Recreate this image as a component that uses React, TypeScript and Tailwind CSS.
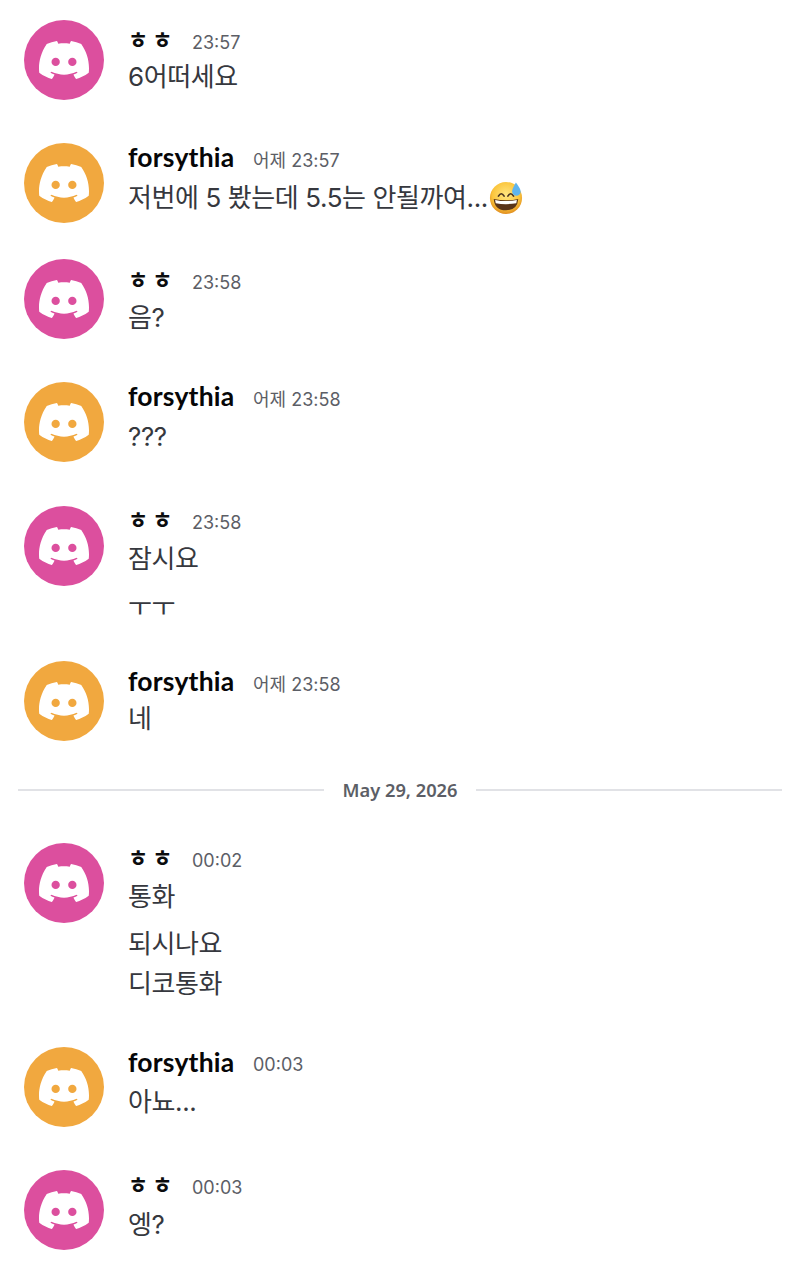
const KR = "font-['Inter','Noto_Sans_CJK_KR',sans-serif]";

type Line = { text: string; cls: string; emoji?: boolean };
type Msg = {
  who: "h" | "f";
  time: string;
  top: string;
  head: string;
  lines: Line[];
};

const messages: Msg[] = [
  { who: "h", time: "23:57", top: "mt-0", head: "mt-[3px]", lines: [{ text: "6어떠세요", cls: "-mt-[2px] h-[40px] items-center" }] },
  {
    who: "f",
    time: "어제 23:57",
    top: "mt-[43px]",
    head: "-mt-[2px]",
    lines: [{ text: "저번에 5 봤는데 5.5는 안될까여...", cls: "mt-[1px] h-[40px] items-center", emoji: true }],
  },
  { who: "h", time: "23:58", top: "mt-[36px]", head: "mt-[4px]", lines: [{ text: "음?", cls: "-mt-[1px] h-[40px] items-center" }] },
  { who: "f", time: "어제 23:58", top: "mt-[43px]", head: "-mt-[2px]", lines: [{ text: "???", cls: "mt-[1px] h-[40px] items-center" }] },
  {
    who: "h",
    time: "23:58",
    top: "mt-[44px]",
    head: "-mt-[3px]",
    lines: [
      { text: "잠시요", cls: "h-[40px] items-center" },
      { text: "ㅜㅜ", cls: "mt-[8px] h-[30px] items-start overflow-hidden" },
    ],
  },
  { who: "f", time: "어제 23:58", top: "mt-[44px]", head: "mt-[4px]", lines: [{ text: "네", cls: "-mt-[2px] h-[40px] items-center" }] },
];

const later: Msg[] = [
  {
    who: "h",
    time: "00:02",
    top: "mt-0",
    head: "-mt-[2px]",
    lines: [
      { text: "통화", cls: "h-[40px] items-center" },
      { text: "되시나요", cls: "mt-[7px] h-[40px] items-center" },
      { text: "디코통화", cls: "h-[40px] items-center" },
    ],
  },
  { who: "f", time: "00:03", top: "mt-[43px]", head: "-mt-[2px]", lines: [{ text: "아뇨...", cls: "mt-[1px] h-[40px] items-center" }] },
  { who: "h", time: "00:03", top: "mt-[43px]", head: "-mt-[2px]", lines: [{ text: "엥?", cls: "mt-[1px] h-[40px] items-center" }] },
];

// discord mark, eyes drawn as plain circles like the reference
function Clyde({ eye }: { eye: string }) {
  return (
    <svg viewBox="0 0 24 24" className="h-[50px] w-[50px]">
      <path
        fill="#fff"
        d="M20.317 4.3698a19.7913 19.7913 0 00-4.8851-1.5152.0741.0741 0 00-.0785.0371c-.211.3753-.4447.8648-.6083 1.2495-1.8447-.2762-3.68-.2762-5.4868 0-.1636-.3933-.4058-.8742-.6177-1.2495a.077.077 0 00-.0785-.037 19.7363 19.7363 0 00-4.8852 1.515.0699.0699 0 00-.0321.0277C.5334 9.0458-.319 13.5799.0992 18.0578a.0824.0824 0 00.0312.0561c2.0528 1.5076 4.0413 2.4228 5.9929 3.0294a.0777.0777 0 00.0842-.0276c.4616-.6304.8731-1.2952 1.226-1.9942a.076.076 0 00-.0416-.1057c-.6528-.2476-1.2743-.5495-1.8722-.8923a.077.077 0 01-.0076-.1277c.1258-.0943.2517-.1923.3718-.2914a.0743.0743 0 01.0776-.0105c3.9278 1.7933 8.18 1.7933 12.0614 0a.0739.0739 0 01.0785.0095c.1202.099.246.1981.3728.2924a.077.077 0 01-.0066.1276 12.2986 12.2986 0 01-1.873.8914.0766.0766 0 00-.0407.1067c.3604.698.7719 1.3628 1.225 1.9932a.076.076 0 00.0842.0286c1.961-.6067 3.9495-1.5219 6.0023-3.0294a.077.077 0 00.0313-.0552c.5004-5.177-.8382-9.6739-3.5485-13.6604a.061.061 0 00-.0312-.0286z"
      />
      <circle cx="8" cy="12.9" r="2" fill={eye} />
      <circle cx="16" cy="12.9" r="2" fill={eye} />
    </svg>
  );
}

function SweatEmoji() {
  return (
    <svg viewBox="0 0 36 36" className="ml-[1px] h-[34px] w-[34px] shrink-0">
      <defs>
        <radialGradient id="face" cx="50%" cy="40%" r="60%">
          <stop offset="0%" stopColor="#ffe680" />
          <stop offset="70%" stopColor="#fbc53c" />
          <stop offset="100%" stopColor="#e08c1e" />
        </radialGradient>
      </defs>
      <circle cx="18" cy="18" r="17" fill="url(#face)" />
      <path d="M10 16q3-5 6 0M20 16q3-5 6 0" fill="none" stroke="#4a3320" strokeWidth="1.8" strokeLinecap="round" />
      <path d="M5 19q13 3 26 0q-1 12-13 12T5 19z" fill="#5a3418" />
      <path d="M6.500 20q11.500 2.500 23 0l-.6 3.500q-11 2-21.800 0z" fill="#fff" />
      <path d="M28.500 1.500q5 6.500 5 9.500a4.500 4.500 0 0 1-9 0q0-3 4-9.500z" fill="#5fb4ee" />
    </svg>
  );
}

function Row({ m }: { m: Msg }) {
  const isH = m.who === "h";
  return (
    <div className={`flex gap-6 pl-6 ${m.top}`}>
      <div
        className={`flex h-20 w-20 shrink-0 items-center justify-center rounded-full ${
          isH ? "bg-[#dc4f9e]" : "bg-[#f1a83f]"
        }`}
      >
        <Clyde eye={isH ? "#dc4f9e" : "#f1a83f"} />
      </div>
      <div className={`min-w-0 flex-1 ${m.head}`}>
        <div className="flex h-[36px] items-center">
          {isH ? (
            <span className={`-mt-[1px] w-[64px] text-[22px] font-bold tracking-[4px] text-[#0b0c0e] ${KR}`}>ㅎㅎ</span>
          ) : (
            <span className="-mt-[2px] w-[125px] font-['Lato',sans-serif] text-[26.500px] font-bold tracking-[0.2px] text-[#060607]">
              forsythia
            </span>
          )}
          <span className={`mt-[3px] text-[18px] text-[#5c5e66] ${KR}`}>{m.time}</span>
        </div>
        {m.lines.map((l, i) => (
          <div key={i} className={`flex text-[26px] leading-[40px] tracking-[-0.4px] text-[#36383e] ${KR} ${l.cls}`}>
            {l.text}
            {l.emoji && <SweatEmoji />}
          </div>
        ))}
      </div>
    </div>
  );
}

export default function App() {
  return (
    <div className="min-h-[1267px] w-[800px] overflow-hidden bg-white pt-5">
      {messages.map((m, i) => (
        <Row key={i} m={m} />
      ))}
      <div className="mt-[35px] flex items-center px-[18px]">
        <div className="h-[2px] flex-1 bg-[#e1e2e6]" />
        <span className="px-[18px] font-['Noto_Sans',sans-serif] text-[18.300px] font-semibold text-[#5c5e66]">May 29, 2026</span>
        <div className="h-[2px] flex-1 bg-[#e1e2e6]" />
      </div>
      <div className="mt-[40px]">
        {later.map((m, i) => (
          <Row key={i} m={m} />
        ))}
      </div>
    </div>
  );
}
